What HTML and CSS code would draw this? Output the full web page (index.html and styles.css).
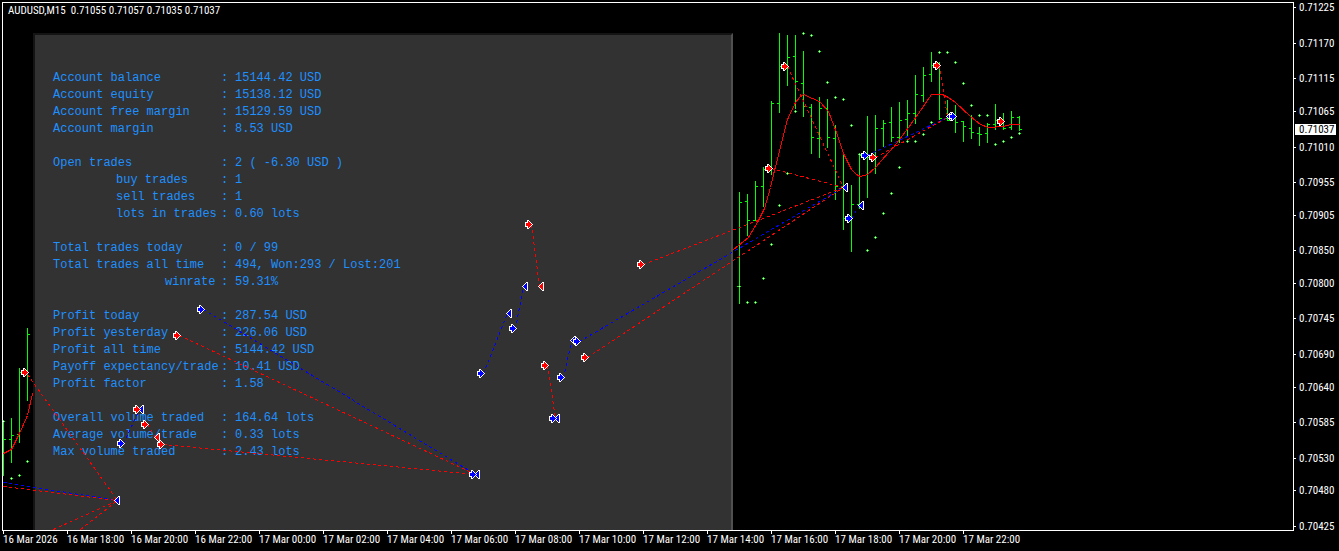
FILE: index.html
```html
<!DOCTYPE html>
<html lang="en">

<head>
    <meta charset="UTF-8">
    <meta name="viewport" content="width=device-width, initial-scale=1.0">
    <title>AUDUSD,M15</title>
    <link rel="stylesheet" href="styles.css">
</head>

<body>
    <main class="terminal">
        <section class="plot">
            <h1 class="quote">AUDUSD,M15 &nbsp;0.71055 0.71057 0.71035 0.71037</h1>

            <!-- Account info -->
            <div class="panel">
                <table class="stats">
                    <tbody>
                        <tr><th>Account balance</th><td>:</td><td>15144.42 USD</td></tr>
                        <tr><th>Account equity</th><td>:</td><td>15138.12 USD</td></tr>
                        <tr><th>Account free margin</th><td>:</td><td>15129.59 USD</td></tr>
                        <tr><th>Account margin</th><td>:</td><td>8.53 USD</td></tr>
                    </tbody>
                    <tbody>
                        <tr><th>Open trades</th><td>:</td><td>2 ( -6.30 USD )</td></tr>
                        <tr><th class="indent">buy trades</th><td>:</td><td>1</td></tr>
                        <tr><th class="indent">sell trades</th><td>:</td><td>1</td></tr>
                        <tr><th class="indent">lots in trades</th><td>:</td><td>0.60 lots</td></tr>
                    </tbody>
                    <tbody>
                        <tr><th>Total trades today</th><td>:</td><td>0 / 99</td></tr>
                        <tr><th>Total trades all time</th><td>:</td><td>494, Won:293 / Lost:201</td></tr>
                        <tr><th class="indent-more">winrate</th><td>:</td><td>59.31%</td></tr>
                    </tbody>
                    <tbody>
                        <tr><th>Profit today</th><td>:</td><td>287.54 USD</td></tr>
                        <tr><th>Profit yesterday</th><td>:</td><td>226.06 USD</td></tr>
                        <tr><th>Profit all time</th><td>:</td><td>5144.42 USD</td></tr>
                        <tr><th>Payoff expectancy/trade</th><td>:</td><td>10.41 USD</td></tr>
                        <tr><th>Profit factor</th><td>:</td><td>1.58</td></tr>
                    </tbody>
                    <tbody>
                        <tr><th>Overall volume traded</th><td>:</td><td>164.64 lots</td></tr>
                        <tr><th>Average volume/trade</th><td>:</td><td>0.33 lots</td></tr>
                        <tr><th>Max volume traded</th><td>:</td><td>2.43 lots</td></tr>
                    </tbody>
                </table>
            </div>

            <!-- Bars, indicators and trades -->
            <svg class="chart" aria-hidden="true">
                <g transform="translate(-3 -3)">
                    <path id="bars" class="bars" />
                    <path id="sarDots" class="bars" />
                    <path id="sarCores" class="sar-core" />
                    <g transform="translate(0.5 0.5)">
                        <polyline class="average" points="3,453 11,449 19,433 27,415 32,393" />
                        <polyline class="average" points="733,249 748,237 757,222 764,208 770,187 774,170 780,147 787,119 795,102 799,97 803,94 812,98 819,101 828,111 836,132 843,153 851,169 856,174 860,176 867,174 875,167 888,152 893,147 908,127 918,113 931,94 942,94 948,97 955,102 970,116 980,124 988,127 1003,126 1010,124 1019,124" />
                        <g id="trades"></g>
                        <g id="markers"></g>
                    </g>
                </g>
            </svg>
        </section>

        <div class="price-axis">
            <ul id="prices" class="prices"></ul>
            <div id="current" class="current"></div>
        </div>

        <ul class="time-axis">
            <li>16 Mar 2026</li>
            <li>16 Mar 18:00</li>
            <li>16 Mar 20:00</li>
            <li>16 Mar 22:00</li>
            <li>17 Mar 00:00</li>
            <li>17 Mar 02:00</li>
            <li>17 Mar 04:00</li>
            <li>17 Mar 06:00</li>
            <li>17 Mar 08:00</li>
            <li>17 Mar 10:00</li>
            <li>17 Mar 12:00</li>
            <li>17 Mar 14:00</li>
            <li>17 Mar 16:00</li>
            <li>17 Mar 18:00</li>
            <li>17 Mar 20:00</li>
            <li>17 Mar 22:00</li>
        </ul>
    </main>

    <script src="chart.js"></script>
</body>

</html>
```

FILE: styles.css
```css
* {
    box-sizing: border-box;
}

body {
    margin: 0;
    background-color: #000;
    color: #fff;
    font-family: "Roboto Condensed", Roboto, sans-serif;
    font-size: 11px;
    line-height: 12px;
}

ul {
    list-style: none;
    margin: 0;
    padding: 0;
}

.terminal {
    display: grid;
    grid-template-columns: minmax(0, 1fr) 45px;
    grid-template-rows: minmax(0, 1fr) 20px;
    height: 100vh;
    padding: 2px 0 0 2px;
    overflow: hidden;
}

.plot {
    position: relative;
    display: flex;
    flex-direction: column;
    border: 1px solid #fff;
    overflow: hidden;
}

.quote {
    height: 30px;
    margin: 0;
    padding: 2px 5px;
    font-size: 11px;
    font-weight: normal;
    white-space: nowrap;
}

.panel {
    flex: 1;
    width: 700px;
    margin-left: 30px;
    padding: 35px 18px 0;
    background-color: #323232;
    border-top: 2px solid #141414;
    border-left: 2px solid #141414;
    border-right: 2px solid #505050;
}

.stats {
    border-collapse: collapse;
    color: #1e90ff;
    font-family: "Liberation Mono", monospace;
    font-size: 12px;
    line-height: 17px;
    white-space: nowrap;
}

.stats th,
.stats td {
    padding: 0;
    font-weight: normal;
    text-align: left;
}

.stats th {
    width: 168px;
}

.stats td:nth-child(2) {
    width: 14px;
}

/* blank line between groups */
.stats tbody + tbody tr:first-child > * {
    padding-top: 17px;
}

.stats .indent {
    padding-left: 63px;
}

.stats .indent-more {
    padding-left: 112px;
}

.chart {
    position: absolute;
    top: 0;
    left: 0;
    width: 100%;
    height: 100%;
    shape-rendering: crispEdges;
}

.bars {
    fill: #00ff00;
}

.sar-core {
    fill: #fff;
}

.average {
    fill: none;
    stroke: #ff0000;
}

.trade {
    stroke-dasharray: 3 3;
}

.trade.sell {
    stroke: #ff0000;
}

.trade.buy {
    stroke: #0000ff;
}

.marker {
    stroke: #fff;
}

.marker.sell {
    fill: #ff0000;
}

.marker.buy {
    fill: #0000ff;
}

.price-axis {
    position: relative;
}

.prices {
    display: flex;
    flex-direction: column;
    height: 100%;
    padding-top: 5px;
}

.prices li {
    display: flex;
    flex: 1 1 0;
    align-items: flex-start;
    gap: 3px;
    min-height: 0;
}

.prices li::before {
    content: "";
    width: 2px;
    height: 1px;
    background-color: #fff;
}

.prices li:last-child {
    flex: 0 0 5px;
}

.prices span {
    margin-top: -5px;
}

.current {
    position: absolute;
    left: 1px;
    width: 41px;
    height: 11px;
    margin-top: -5px;
    padding-left: 4px;
    background-color: #fff;
    color: #000;
}

.time-axis {
    display: flex;
    padding-left: 1px;
    white-space: nowrap;
}

.time-axis li {
    flex: 0 0 64px;
    min-width: 0;
}

.time-axis li::before {
    content: "";
    display: block;
    width: 1px;
    height: 3px;
    background-color: #fff;
}
```

FILE: chart.js
```js
// x, high, low, open, close
const bars = [
    [3, 421, 475, 439, 439], [11, 418, 462, 439, 435], [19, 368, 442, 434, 372], [27, 328, 400, 372, 334],
    [739, 192, 303, 286, 202], [747, 194, 235, 201, 220], [755, 181, 220, 220, 186], [763, 167, 206, 186, 169],
    [771, 101, 174, 168, 103], [779, 33, 112, 103, 66], [787, 35, 85, 66, 57], [795, 35, 108, 56, 81],
    [803, 51, 116, 83, 106], [811, 104, 153, 107, 137], [819, 97, 157, 138, 108], [827, 99, 147, 108, 137],
    [835, 125, 199, 138, 186], [843, 153, 229, 187, 218], [851, 185, 251, 218, 204], [859, 154, 208, 204, 155],
    [867, 116, 197, 155, 157], [875, 115, 173, 157, 128], [883, 120, 146, 128, 123], [891, 107, 141, 122, 137],
    [899, 102, 142, 137, 120], [907, 100, 135, 119, 113], [915, 75, 123, 113, 94], [923, 67, 101, 95, 75],
    [931, 52, 81, 74, 65], [939, 62, 119, 65, 118], [947, 100, 120, 118, 120], [955, 105, 132, 117, 122],
    [963, 121, 141, 121, 126], [971, 115, 138, 128, 132], [979, 127, 145, 133, 134], [987, 123, 142, 133, 124],
    [995, 104, 129, 124, 120], [1003, 113, 129, 120, 128], [1011, 111, 129, 127, 117], [1019, 116, 130, 117, 129]
];

const sar = [
    [3, 421], [11, 478], [19, 475], [27, 461], [739, 286], [747, 302], [755, 302], [763, 278], [771, 244],
    [779, 205], [787, 173], [795, 111], [803, 33], [811, 35], [819, 51], [827, 82], [835, 97], [843, 99],
    [851, 125], [859, 154], [867, 250], [875, 237], [883, 213], [891, 193], [899, 167], [907, 141], [915, 141],
    [923, 134], [931, 122], [939, 52], [947, 52], [955, 62], [963, 83], [971, 105], [979, 115], [987, 115],
    [995, 144], [1003, 141], [1011, 137], [1019, 133]
];

const trades = [
    ["buy", 3, 482, 117, 500], ["sell", 3, 486, 117, 500], ["sell", 53, 529, 117, 500], ["sell", 80, 529, 117, 500],
    ["sell", 27, 374, 117, 500], ["buy", 123, 443, 139, 409], ["sell", 147, 424, 155, 437],
    ["sell", 163, 444, 475, 474], ["buy", 203, 309, 475, 474], ["sell", 179, 335, 475, 474],
    ["buy", 483, 373, 507, 313], ["buy", 515, 328, 523, 286], ["sell", 531, 224, 539, 286],
    ["buy", 563, 377, 571, 341], ["sell", 547, 365, 555, 418], ["buy", 579, 341, 843, 187],
    ["sell", 587, 357, 843, 187], ["sell", 643, 264, 843, 187], ["sell", 771, 168, 843, 187],
    ["sell", 787, 66, 843, 187], ["buy", 851, 218, 859, 205], ["buy", 867, 155, 947, 117],
    ["sell", 875, 157, 947, 117], ["sell", 939, 65, 947, 117]
];

// left edge and centre of each arrow
const entries = {
    sell: [[21, 372], [173, 335], [133, 409], [141, 424], [157, 444], [525, 224], [541, 365], [581, 357],
        [637, 264], [781, 66], [765, 168], [869, 157], [933, 65], [997, 121]],
    buy: [[117, 443], [197, 309], [477, 373], [509, 328], [573, 341], [557, 377], [549, 418], [469, 474],
        [845, 218], [861, 155], [949, 116]]
};

const exits = {
    sell: [[154, 437], [538, 286]],
    buy: [[114, 500], [138, 409], [506, 313], [522, 286], [570, 340], [554, 418], [474, 474], [842, 187],
        [858, 205], [946, 116]]
};

const prices = [71225, 71170, 71115, 71065, 71010, 70955, 70905, 70850, 70800, 70745, 70690, 70640, 70585, 70530, 70480, 70425];
const currentPrice = 71037;

document.getElementById("bars").setAttribute("d", bars.map(([x, high, low, open, close]) =>
    `M${x} ${high}h1V${low + 1}h-1zM${x - 2} ${open}h2v1h-2zM${x + 1} ${close}h2v1h-2z`
).join(""));

document.getElementById("sarDots").setAttribute("d", sar.map(([x, y]) =>
    `M${x - 1} ${y}h3v1h-3zM${x} ${y - 1}h1v3h-1z`
).join(""));

document.getElementById("sarCores").setAttribute("d", sar.map(([x, y]) => `M${x} ${y}h1v1h-1z`).join(""));

document.getElementById("trades").innerHTML = trades.map(([side, x1, y1, x2, y2]) =>
    `<line class="trade ${side}" x1="${x1}" y1="${y1}" x2="${x2}" y2="${y2}" />`
).join("");

const drawMarkers = (groups, shape) => Object.entries(groups).map(([side, points]) =>
    points.map(([x, y]) => `<path class="marker ${side}" d="M${x} ${y}${shape}" />`).join("")
).join("");

document.getElementById("markers").innerHTML =
    drawMarkers(exits, "l4 -4h1v8h-1z") +
    drawMarkers(entries, "v-2h2v-2h1l4 4l-4 4h-1v-2h-2z");

const formatPrice = (price) => (price / 100000).toFixed(5);
const range = prices[0] - prices[prices.length - 1];

document.getElementById("prices").innerHTML = prices.map((price, i) => {
    const gap = i < prices.length - 1 ? price - prices[i + 1] : 0;
    return `<li${gap ? ` style="flex-grow: ${gap}"` : ""}><span>${formatPrice(price)}</span></li>`;
}).join("");

// last price sits on the same scale as the ticks
const current = document.getElementById("current");
const offset = (prices[0] - currentPrice) / range;
current.textContent = formatPrice(currentPrice);
current.style.top = `calc(5px + (100% - 10px) * ${offset})`;
```
